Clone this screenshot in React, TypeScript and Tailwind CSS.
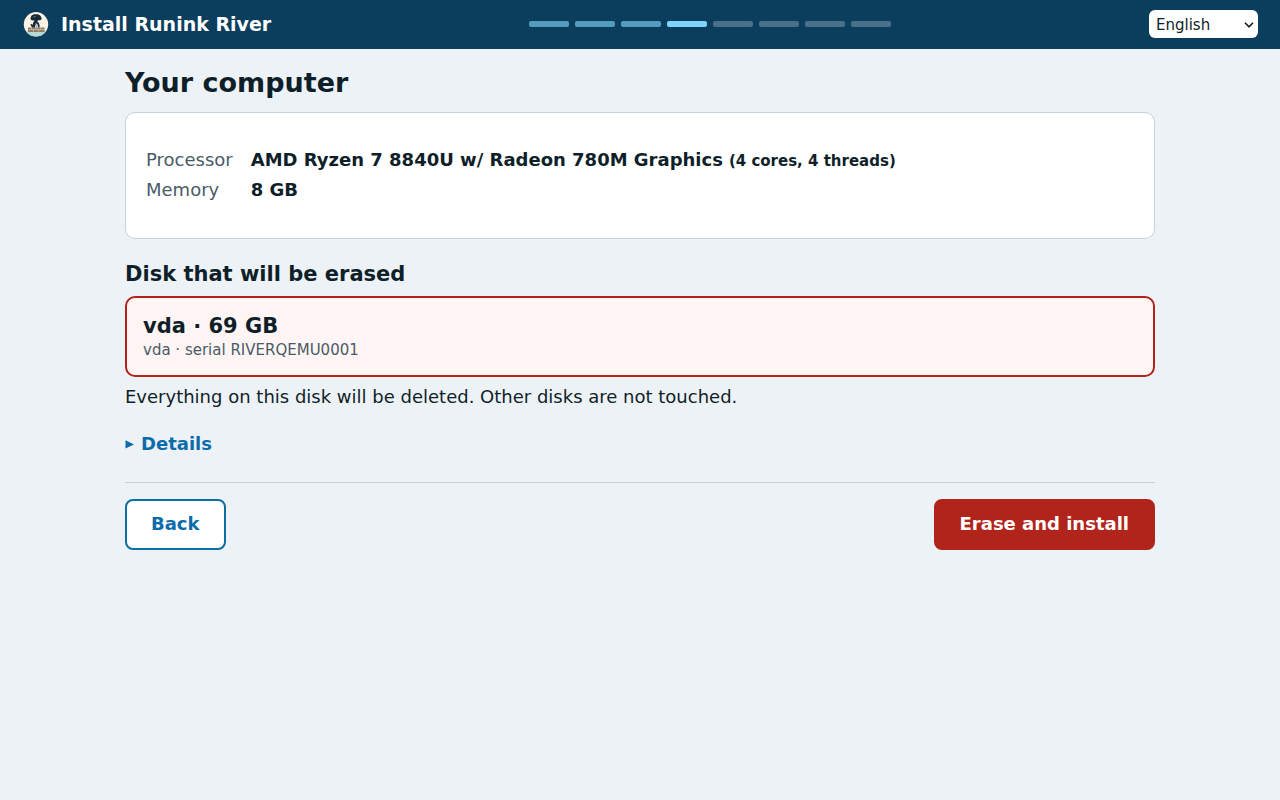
import { useState } from "react";

type StepState = "done" | "current" | "todo";

const steps: StepState[] = ["done", "done", "done", "current", "todo", "todo", "todo", "todo"];

const stepColour: Record<StepState, string> = {
  done: "bg-[#549bc0]",
  current: "bg-[#7dd3fc]",
  todo: "bg-[#4a7089]",
};

function Logo() {
  return (
    <svg viewBox="0 0 28 28" className="size-7 shrink-0" aria-hidden="true">
      <defs>
        <clipPath id="logo-disc">
          <circle cx="14" cy="14.3" r="12.2" />
        </clipPath>
      </defs>
      <g clipPath="url(#logo-disc)">
        <rect width="28" height="28" fill="#fbf3e4" />
        <rect y="21" width="28" height="7" fill="#acd4d2" />
        <path d="M8 23h11M10 25h9" stroke="#d5e7df" strokeWidth="0.7" />
        <rect x="6" y="17.4" width="16.5" height="4.6" rx="0.8" fill="#8b7b67" />
        <path d="M6.5 19.6h15.5M9.5 17.4v1.5M14 17.4v1.5M18.5 17.4v1.5M11.5 19.9v1.8M16.5 19.9v1.8" stroke="#d3c3a8" strokeWidth="0.8" />
        <path d="M8.6 9.2C8.2 6 10.8 4 13.8 4.2c3-.4 5.8 1.8 5.9 4.6-.6 1.3-2 1.7-3.5 1.4l-.9 1.2c1.8.9 2.6 3 2.2 6h-1.3l-.8-3.2-1.3-1-1.2 4.2h-2.6c-1-.9-1.7-2-1.7-3.4 1-.2 1.7.2 2.2.9 0-1.9.7-3.2 1.9-4.4-1.3.3-3 0-4.1-1.3z" fill="#182b38" />
        <path d="M13.7 13.4l1.2 4M11.5 7l2-.6" stroke="#7d98a5" strokeWidth="0.8" />
      </g>
    </svg>
  );
}

export default function App() {
  const [language, setLanguage] = useState("en");

  return (
    <div className="min-h-screen bg-[#edf2f7] font-['DejaVu_Sans',sans-serif] text-lg leading-[27px] text-[#0f1f2a]">
      <header className="flex items-center justify-between bg-[#0b3d5c] px-[22px] pt-2.5 pb-[11px] text-white">
        <div className="flex items-center gap-[11px]">
          <Logo />
          <span className="text-[19px] leading-7 font-bold">Install Runink River</span>
        </div>
        <ol className="flex gap-1.5" aria-label="Progress">
          {steps.map((state, i) => (
            <li
              key={i}
              aria-current={state === "current" ? "step" : undefined}
              className={`h-1.5 w-10 rounded-xs ${stepColour[state]}`}
            />
          ))}
        </ol>
        <div className="relative h-7">
          <select
            aria-label="Language"
            value={language}
            onChange={(e) => setLanguage(e.target.value)}
            className="block h-7 w-[109px] appearance-none rounded-md bg-white pt-px pr-6 pl-[7px] text-[15px] leading-5 text-[#0f1f2a]"
          >
            <option value="en">English</option>
            <option value="de">Deutsch</option>
            <option value="fr">Français</option>
          </select>
          <svg viewBox="0 0 10 8" className="pointer-events-none absolute top-[11px] right-1 h-2 w-2.5" aria-hidden="true">
            <path d="M1 1.8l4 4L9 1.8" fill="none" stroke="#0f1f2a" strokeWidth="1.6" />
          </svg>
        </div>
      </header>

      <main className="mx-auto max-w-[1070px] px-5 pt-4">
        <h1 className="text-[27px] leading-9 font-bold">Your computer</h1>
        <section className="mt-[11px] rounded-[10px] border border-[#c5d2dd] bg-white px-5 pt-8 pb-[33px]">
          <dl className="grid grid-cols-[auto_1fr] gap-x-[18px] leading-[30px]">
            <dt className="text-[#4a5b68]">Processor</dt>
            <dd className="flex items-baseline gap-1.5 font-bold">
              AMD Ryzen 7 8840U w/ Radeon 780M Graphics
              <span className="text-[15px] leading-5">(4 cores, 4 threads)</span>
            </dd>
            <dt className="text-[#4a5b68]">Memory</dt>
            <dd className="font-bold">8 GB</dd>
          </dl>
        </section>

        <h2 className="mt-[21px] text-[21px] leading-7 font-bold">Disk that will be erased</h2>
        <section className="mt-2 rounded-[10px] border-2 border-[#b0241c] bg-[#fff5f4] px-4 py-3.5">
          <p className="text-[21px] leading-7 font-bold">vda · 69 GB</p>
          <p className="text-[15px] leading-[21px] text-[#4a5b68]">vda · serial RIVERQEMU0001</p>
        </section>
        <p className="mt-1.5">Everything on this disk will be deleted. Other disks are not touched.</p>

        <details className="group mt-5">
          <summary className="flex cursor-pointer list-none items-center gap-[7px] font-bold text-[#0b6cab]">
            <svg viewBox="0 0 9 10" className="h-2.5 w-[9px] group-open:rotate-90" aria-hidden="true">
              <path d="M0.5 1.2L9 5.4L0.5 9.6Z" fill="currentColor" />
            </svg>
            Details
          </summary>
          <p className="mt-2">Disk vda, 69 GB, serial RIVERQEMU0001</p>
        </details>

        <div className="mt-[25px] flex items-center justify-between border-t border-[#c5d2dd] pt-4">
          <button
            type="button"
            className="rounded-lg border-2 border-[#0b6fa4] bg-white px-6 pt-[9px] pb-[11px] font-bold text-[#0b6cab]"
          >
            Back
          </button>
          <button
            type="button"
            className="rounded-lg border-2 border-[#b0241c] bg-[#b0241c] px-6 pt-[9px] pb-[11px] font-bold text-white"
          >
            Erase and install
          </button>
        </div>
      </main>
    </div>
  );
}
